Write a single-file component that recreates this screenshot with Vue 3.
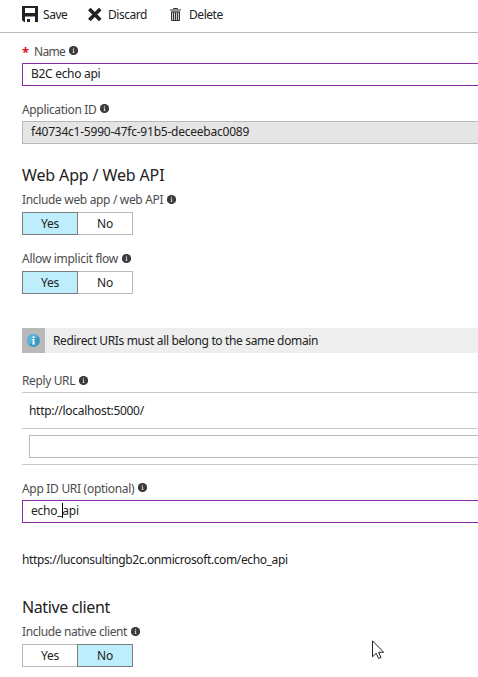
<script setup>
import { h } from 'vue'

const InfoDot = () =>
  h('svg', { class: 'dot', viewBox: '0 0 9 9', width: 9, height: 9 }, [
    h('circle', { cx: 4.5, cy: 4.5, r: 4.6, fill: '#3a3a3a' }),
    h('path', { d: 'M3.5 3.6H5.1V6.5H5.7V7.1H3.4V6.5H4V4.2H3.5ZM4 1.7H5.1V2.7H4Z', fill: '#ccc' }),
  ])
</script>

<template>
  <main class="blade">
    <header class="toolbar">
      <div class="command save">
        <svg width="16" height="16" viewBox="0 0 16 16"><path fill="#222" fill-rule="evenodd" d="M0 0H16V16H13V10.5H3V16H2L0 14ZM3 2V7H13V2ZM5 13H8V16H5Z" /></svg>
        <span class="t-save">Save</span>
      </div>
      <div class="command discard">
        <svg width="14" height="13" viewBox="0 0 14 13"><path fill="none" stroke="#222" stroke-width="3.6" d="M1.3 1L12.3 12M12.3 1L1.3 12" /></svg>
        <span class="t-discard">Discard</span>
      </div>
      <div class="command delete">
        <svg width="11" height="13" viewBox="0 0 11 13"><path fill="#ccc" d="M1 3H10V13H1Z" /><path fill="none" stroke="#333" d="M3.5 1.5V.5H7.5V1.5M0 2H11M1.5 4V12.5H9.5V4M3.5 4V12M5.5 4V12M7.5 4V12M1 4H10" /></svg>
        <span class="t-delete">Delete</span>
      </div>
    </header>

    <form class="form" @submit.prevent>
      <div class="label first"><b class="star">*</b><span class="t-name">Name</span><InfoDot /></div>
      <div class="box active"><span class="t-b2c">B2C echo api</span></div>

      <div class="label second"><span class="t-appid">Application ID</span><InfoDot /></div>
      <div class="box readonly"><span class="t-guid">f40734c1-5990-47fc-91b5-deceebac0089</span></div>

      <h2 class="web"><span class="t-web">Web App / Web API</span></h2>
      <div class="label"><span class="t-include">Include web app / web API</span><InfoDot /></div>
      <div class="toggle"><span class="option on">Yes</span><span class="option">No</span></div>

      <div class="label implicit"><span class="t-allow">Allow implicit flow</span><InfoDot /></div>
      <div class="toggle"><span class="option on">Yes</span><span class="option">No</span></div>

      <div class="notice">
        <div class="notice-icon">
          <svg width="13" height="13" viewBox="0 0 13 13"><circle cx="6.5" cy="6.5" r="6.5" fill="#3999c6" /><path fill="#59b4d9" d="M2 11.2A6.5 6.5 0 0 1 11.1 1.9Z" /><path fill="#fff" d="M5.6 2.3H7.4V4H5.6ZM5 5H7.4V9.5H8V10.4H5V9.5H5.7V5.8H5Z" /></svg>
        </div>
        <span class="t-redirect">Redirect URIs must all belong to the same domain</span>
      </div>

      <div class="label reply"><span class="t-reply">Reply URL</span><InfoDot /></div>
      <div class="list">
        <div class="list-row"><span class="t-local">http://localhost:5000/</span></div>
        <div class="list-row entry"><div class="box"></div></div>
      </div>

      <div class="label uri"><span class="t-uri">App ID URI (optional)</span><InfoDot /></div>
      <div class="box active"><span class="t-echo">echo_<i class="caret"></i>api</span></div>
      <div class="full-uri"><span class="t-full">https://luconsultingb2c.onmicrosoft.com/echo_api</span></div>

      <h2 class="native"><span class="t-native">Native client</span></h2>
      <div class="label"><span class="t-client">Include native client</span><InfoDot /></div>
      <div class="toggle"><span class="option">Yes</span><span class="option on">No</span></div>
    </form>

    <svg class="pointer" width="13" height="20" viewBox="0 0 13 20"><path fill="#fff" stroke="#222" d="M.5 .8V16.8L4.2 13.3L6.7 18.5L9 17.5L6.6 12.3H11.7Z" /></svg>
  </main>
</template>

<style>
body { background: #fff; overflow: hidden; }
</style>

<style scoped>
.blade {
  position: relative;
  width: 478px;
  height: 677px;
  overflow: hidden;
  box-sizing: border-box;
  font: 12px/16px "Noto Sans", "Open Sans", sans-serif;
  letter-spacing: -0.25px;
  color: #222;
  white-space: nowrap;
}
.blade * { box-sizing: border-box; }
.toolbar { display: flex; height: 33px; padding: 0 0 3px 22px; border-bottom: 1px solid #b9b9b9; }
.command { display: flex; align-items: center; gap: 5px; }
.command svg { flex: none; }
.save { width: 66px; }
.save svg { margin-top: -1px; }
.discard { width: 82px; gap: 6px; }
.delete { gap: 8px; }
.form { padding-left: 22px; }
.label { display: flex; align-items: center; height: 24px; color: #4c4c4c; }
:deep(.dot) { flex: none; margin: -2px 0 0 4px; }
.first { margin-top: 7px; height: 23px; }
.star { width: 12px; color: #e01020; font-size: 13px; }
.second { margin-top: 12px; height: 23px; }
.box { display: flex; align-items: center; height: 23px; padding: 0 0 1px 8px; border: 1px solid #b9b9b9; border-right: 0; }
.active { border-color: #8a2da5; }
.readonly { background: #e5e5e5; }
h2 { display: flex; align-items: center; height: 24px; margin: 0; font-size: 16px; font-weight: 400; line-height: 24px; }
.web { margin-top: 19px; margin-bottom: 1px; }
.toggle { display: flex; height: 23px; }
.option { display: flex; justify-content: center; align-items: center; width: 56px; border: 1px solid #b9b9b9; }
.option + .option { margin-left: -1px; }
.on { position: relative; background: #beedfb; border-color: #7d7d7d; }
.implicit { margin-top: 12px; }
.notice { display: flex; align-items: center; height: 25px; margin-top: 34px; background: #eee; }
.notice-icon { display: flex; align-items: center; justify-content: center; width: 23px; height: 25px; margin-right: 8px; background: #b9b9b9; }
.reply { margin-top: 17px; height: 22px; }
.list { border-top: 1px solid #c8c8c8; }
.list-row { display: flex; align-items: center; height: 36px; padding-left: 7px; border-bottom: 1px solid #c8c8c8; }
.entry .box { flex: 1; }
.uri { margin-top: 12px; height: 23px; }
.full-uri { margin-top: 29px; height: 16px; }
.native { margin-top: 27px; margin-bottom: 1px; }
.caret { display: inline-block; width: 1px; height: 15px; margin-right: -1px; background: #000; vertical-align: -3px; }
.t-save, .t-discard, .t-delete { letter-spacing: -0.45px; }
.t-name { letter-spacing: -0.7px; }
.t-b2c, .t-local { letter-spacing: -0.3px; }
.t-appid { letter-spacing: -0.34px; }
.t-uri { letter-spacing: -0.3px; }
.t-guid { letter-spacing: -0.23px; }
.t-web { letter-spacing: -0.13px; }
.t-include { letter-spacing: -0.34px; }
.t-allow { letter-spacing: -0.28px; }
.t-redirect { letter-spacing: -0.35px; }
.t-reply, .t-client { letter-spacing: -0.38px; }
.t-full { letter-spacing: -0.38px; }
.t-native { letter-spacing: -0.4px; }
.pointer { position: absolute; left: 372px; top: 640px; }
</style>
